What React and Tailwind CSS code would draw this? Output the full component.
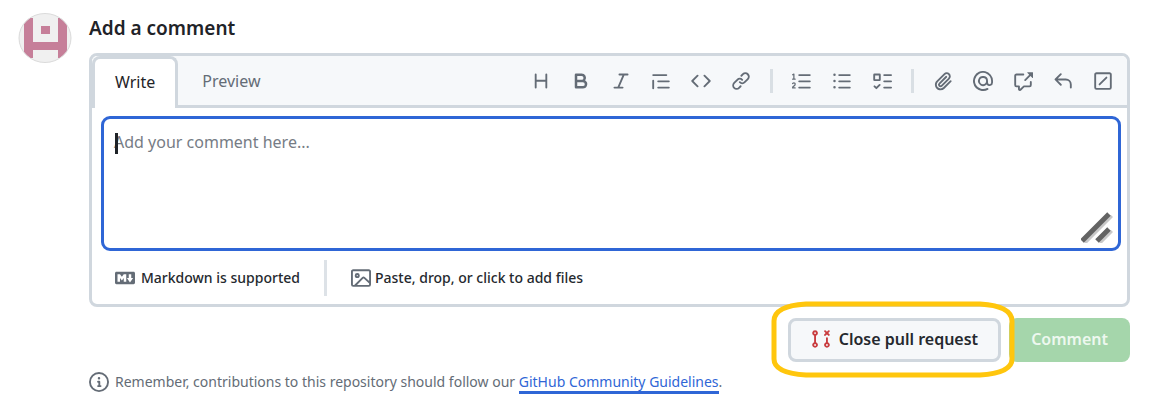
const ICONS = {
  heading: 'M3.75 2a.75.75 0 0 1 .75.75V7h7V2.75a.75.75 0 0 1 1.5 0v10.5a.75.75 0 0 1-1.5 0V8.5h-7v4.75a.75.75 0 0 1-1.5 0V2.75A.75.75 0 0 1 3.75 2Z',
  bold: 'M4 2h4.5a3.501 3.501 0 0 1 2.852 5.53A3.499 3.499 0 0 1 9.5 14H4a1 1 0 0 1-1-1V3a1 1 0 0 1 1-1Zm1 7v3h4.5a1.5 1.5 0 0 0 0-3Zm3.5-2a1.5 1.5 0 0 0 0-3H5v3Z',
  italic: 'M6 2.75A.75.75 0 0 1 6.75 2h6.5a.75.75 0 0 1 0 1.5h-2.505l-3.858 9H9.25a.75.75 0 0 1 0 1.5h-6.5a.75.75 0 0 1 0-1.5h2.505l3.858-9H6.75A.75.75 0 0 1 6 2.75Z',
  quote: 'M1.75 2.5h10.5a.75.75 0 0 1 0 1.5H1.75a.75.75 0 0 1 0-1.5Zm4 5h8.5a.75.75 0 0 1 0 1.5h-8.5a.75.75 0 0 1 0-1.5Zm0 5h8.5a.75.75 0 0 1 0 1.5h-8.5a.75.75 0 0 1 0-1.5ZM2.5 7.75v6a.75.75 0 0 1-1.5 0v-6a.75.75 0 0 1 1.5 0Z',
  code: 'm11.28 3.22 4.25 4.25a.75.75 0 0 1 0 1.06l-4.25 4.25a.749.749 0 0 1-1.275-.326.749.749 0 0 1 .215-.734L13.94 8l-3.72-3.72a.749.749 0 0 1 .326-1.275.749.749 0 0 1 .734.215Zm-6.56 0a.751.751 0 0 1 1.042.018.751.751 0 0 1 .018 1.042L2.06 8l3.72 3.72a.749.749 0 0 1-.326 1.275.749.749 0 0 1-.734-.215L.47 8.53a.75.75 0 0 1 0-1.06Z',
  link: 'm7.775 3.275 1.25-1.25a3.5 3.5 0 1 1 4.95 4.95l-2.5 2.5a3.5 3.5 0 0 1-4.95 0 .751.751 0 0 1 .018-1.042.751.751 0 0 1 1.042-.018 1.998 1.998 0 0 0 2.83 0l2.5-2.5a2.002 2.002 0 0 0-2.83-2.83l-1.25 1.25a.751.751 0 0 1-1.042-.018.751.751 0 0 1-.018-1.042Zm-4.69 9.64a1.998 1.998 0 0 0 2.83 0l1.25-1.25a.751.751 0 0 1 1.042.018.751.751 0 0 1 .018 1.042l-1.25 1.25a3.5 3.5 0 1 1-4.95-4.95l2.5-2.5a3.5 3.5 0 0 1 4.95 0 .751.751 0 0 1-.018 1.042.751.751 0 0 1-1.042.018 1.998 1.998 0 0 0-2.83 0l-2.5 2.5a1.998 1.998 0 0 0 0 2.83Z',
  ordered: 'M5 3.25a.75.75 0 0 1 .75-.75h8.5a.75.75 0 0 1 0 1.5h-8.5A.75.75 0 0 1 5 3.25Zm0 5a.75.75 0 0 1 .75-.75h8.5a.75.75 0 0 1 0 1.5h-8.5A.75.75 0 0 1 5 8.25Zm0 5a.75.75 0 0 1 .75-.75h8.5a.75.75 0 0 1 0 1.5h-8.5a.75.75 0 0 1-.75-.75ZM.924 10.32a.5.5 0 0 1-.851-.525l.001-.001.001-.002.002-.004.007-.011c.097-.144.215-.273.348-.384.228-.19.588-.392 1.068-.392.468 0 .858.181 1.126.484.259.294.377.673.377 1.038 0 .987-.686 1.495-1.156 1.845l-.047.035c-.303.225-.522.4-.654.597h1.357a.5.5 0 0 1 0 1H.5a.5.5 0 0 1-.5-.5c0-1.005.692-1.52 1.167-1.875l.035-.025c.531-.396.8-.625.8-1.078a.57.57 0 0 0-.128-.376C1.806 10.068 1.695 10 1.5 10a.658.658 0 0 0-.429.163.835.835 0 0 0-.144.153ZM2.003 2.5V6h.503a.5.5 0 0 1 0 1H.5a.5.5 0 0 1 0-1h.503V3.308l-.28.14a.5.5 0 0 1-.446-.895l1.003-.5a.5.5 0 0 1 .723.447Z',
  unordered: 'M5.75 2.5h8.5a.75.75 0 0 1 0 1.5h-8.5a.75.75 0 0 1 0-1.5Zm0 5h8.5a.75.75 0 0 1 0 1.5h-8.5a.75.75 0 0 1 0-1.5Zm0 5h8.5a.75.75 0 0 1 0 1.5h-8.5a.75.75 0 0 1 0-1.5ZM2 14a1 1 0 1 1 0-2 1 1 0 0 1 0 2Zm1-6a1 1 0 1 1-2 0 1 1 0 0 1 2 0ZM2 4a1 1 0 1 1 0-2 1 1 0 0 1 0 2Z',
  tasklist: 'M2 2h4a1 1 0 0 1 1 1v4a1 1 0 0 1-1 1H2a1 1 0 0 1-1-1V3a1 1 0 0 1 1-1Zm4.655 8.595a.75.75 0 0 1 0 1.06L4.03 14.28a.75.75 0 0 1-1.06 0l-1.5-1.5a.749.749 0 0 1 .326-1.275.749.749 0 0 1 .734.215l.97.97 2.095-2.095a.75.75 0 0 1 1.06 0ZM9.75 2.5h5.5a.75.75 0 0 1 0 1.5h-5.5a.75.75 0 0 1 0-1.5Zm0 5h5.5a.75.75 0 0 1 0 1.5h-5.5a.75.75 0 0 1 0-1.5Zm0 5h5.5a.75.75 0 0 1 0 1.5h-5.5a.75.75 0 0 1 0-1.5Zm-7.25-9v3h3v-3Z',
  paperclip: 'M12.212 3.02a1.753 1.753 0 0 0-2.478.003l-5.83 5.83a3.007 3.007 0 0 0-.88 2.127c0 .795.315 1.551.88 2.116.567.567 1.333.89 2.126.89.79 0 1.548-.321 2.116-.89l5.48-5.48a.75.75 0 0 1 1.061 1.06l-5.48 5.48a4.492 4.492 0 0 1-3.177 1.33c-1.2 0-2.345-.487-3.187-1.33a4.483 4.483 0 0 1-1.32-3.177c0-1.195.475-2.341 1.32-3.186l5.83-5.83a3.25 3.25 0 0 1 5.553 2.297c0 .863-.343 1.691-.953 2.301L7.439 12.39c-.375.377-.884.59-1.416.593a1.998 1.998 0 0 1-1.412-.593 1.992 1.992 0 0 1 0-2.828l5.48-5.48a.751.751 0 0 1 1.042.018.751.751 0 0 1 .018 1.042l-5.48 5.48a.492.492 0 0 0 0 .707.499.499 0 0 0 .352.154.51.51 0 0 0 .356-.154l5.833-5.827a1.755 1.755 0 0 0 0-2.481Z',
  mention: 'M4.75 2.37a6.501 6.501 0 0 0 6.5 11.26.75.75 0 0 1 .75 1.298A7.999 7.999 0 0 1 .989 4.148 8 8 0 0 1 16 7.75v1.5a2.75 2.75 0 0 1-5.072 1.475 3.999 3.999 0 0 1-6.65-4.19A4 4 0 0 1 12 8v1.25a1.25 1.25 0 0 0 2.5 0V7.867a6.5 6.5 0 0 0-9.75-5.496ZM10.5 8a2.5 2.5 0 1 0-5 0 2.5 2.5 0 0 0 5 0Z',
  crossReference: 'M2.75 3.5a.25.25 0 0 0-.25.25v7.5c0 .138.112.25.25.25h2a.75.75 0 0 1 .75.75v2.19l2.72-2.72a.749.749 0 0 1 .53-.22h4.5a.25.25 0 0 0 .25-.25v-2.5a.75.75 0 0 1 1.5 0v2.5A1.75 1.75 0 0 1 13.25 13H9.06l-2.573 2.573A1.458 1.458 0 0 1 4 14.543V13H2.75A1.75 1.75 0 0 1 1 11.25v-7.5C1 2.784 1.784 2 2.75 2h5.5a.75.75 0 0 1 0 1.5ZM16 1.25v4.146a.25.25 0 0 1-.427.177L14.03 4.03l-3.75 3.75a.749.749 0 0 1-1.275-.326.749.749 0 0 1 .215-.734l3.75-3.75-1.543-1.543A.25.25 0 0 1 11.604 1h4.146a.25.25 0 0 1 .25.25Z',
  reply: 'M6.78 1.97a.75.75 0 0 1 0 1.06L3.81 6h6.44A4.75 4.75 0 0 1 15 10.75v2.5a.75.75 0 0 1-1.5 0v-2.5a3.25 3.25 0 0 0-3.25-3.25H3.81l2.97 2.97a.749.749 0 0 1-.326 1.275.749.749 0 0 1-.734-.215L1.47 7.28a.75.75 0 0 1 0-1.06l4.25-4.25a.75.75 0 0 1 1.06 0Z',
  diffIgnored: 'M13.25 1c.966 0 1.75.784 1.75 1.75v10.5A1.75 1.75 0 0 1 13.25 15H2.75A1.75 1.75 0 0 1 1 13.25V2.75C1 1.784 1.784 1 2.75 1ZM2.75 2.5a.25.25 0 0 0-.25.25v10.5c0 .138.112.25.25.25h10.5a.25.25 0 0 0 .25-.25V2.75a.25.25 0 0 0-.25-.25Zm8.53 3.28-5.5 5.5a.75.75 0 0 1-1.06-1.06l5.5-5.5a.75.75 0 0 1 1.06 1.06Z',
  markdown: 'M14.85 3c.63 0 1.15.52 1.14 1.15v7.7c0 .63-.51 1.15-1.15 1.15H1.15C.52 13 0 12.48 0 11.84V4.15C0 3.52.52 3 1.15 3ZM9 11V5H7L5.5 7 4 5H2v6h2V8l1.5 1.92L7 8v3Zm2.99.5L14.5 8H13V5h-2v3H9.5Z',
  image: 'M16 13.25A1.75 1.75 0 0 1 14.25 15H1.75A1.75 1.75 0 0 1 0 13.25V2.75C0 1.784.784 1 1.75 1h12.5c.966 0 1.75.784 1.75 1.75ZM1.75 2.5a.25.25 0 0 0-.25.25v10.5c0 .138.112.25.25.25h.94l.03-.03 6.077-6.078a1.75 1.75 0 0 1 2.412-.06L14.5 10.31V2.75a.25.25 0 0 0-.25-.25Zm12.5 11a.25.25 0 0 0 .25-.25v-.917l-4.298-3.889a.25.25 0 0 0-.344.009L4.81 13.5ZM7 6a2 2 0 1 1-3.999.001A2 2 0 0 1 7 6ZM5.5 6a.5.5 0 1 0-1 0 .5.5 0 0 0 1 0Z',
  info: 'M0 8a8 8 0 1 1 16 0A8 8 0 0 1 0 8Zm8-6.5a6.5 6.5 0 1 0 0 13 6.5 6.5 0 0 0 0-13ZM6.5 7.75A.75.75 0 0 1 7.25 7h1a.75.75 0 0 1 .75.75v2.75h.25a.75.75 0 0 1 0 1.5h-2a.75.75 0 0 1 0-1.5h.25v-2h-.25a.75.75 0 0 1-.75-.75ZM8 6a1 1 0 1 1 0-2 1 1 0 0 1 0 2Z',
  pullRequestClosed: 'M3.25 1A2.25 2.25 0 0 1 4 5.372v5.256a2.251 2.251 0 1 1-1.5 0V5.372A2.251 2.251 0 0 1 3.25 1Zm9.5 5.5a.75.75 0 0 1 .75.75v3.378a2.251 2.251 0 1 1-1.5 0V7.25a.75.75 0 0 1 .75-.75Zm-2.03-5.273a.75.75 0 0 1 1.06 0l.97.97.97-.97a.748.748 0 0 1 1.265.332.75.75 0 0 1-.205.729l-.97.97.97.97a.751.751 0 0 1-.018 1.042.751.751 0 0 1-1.042.018l-.97-.97-.97.97a.749.749 0 0 1-1.275-.326.749.749 0 0 1 .215-.734l.97-.97-.97-.97a.75.75 0 0 1 0-1.06ZM2.5 3.25a.75.75 0 1 0 1.5 0 .75.75 0 0 0-1.5 0ZM3.25 12a.75.75 0 1 0 0 1.5.75.75 0 0 0 0-1.5Zm9.5 0a.75.75 0 1 0 0 1.5.75.75 0 0 0 0-1.5Z',
};

const TOOL_GROUPS = [
  [
    ['Heading', 'heading'],
    ['Bold', 'bold'],
    ['Italic', 'italic'],
    ['Quote', 'quote'],
    ['Code', 'code'],
    ['Link', 'link'],
  ],
  [
    ['Numbered list', 'ordered'],
    ['Unordered list', 'unordered'],
    ['Task list', 'tasklist'],
  ],
  [
    ['Attach files', 'paperclip'],
    ['Mention', 'mention'],
    ['Reference', 'crossReference'],
    ['Saved replies', 'reply'],
    ['Slash commands', 'diffIgnored'],
  ],
];

function Icon({ name, className = 'size-5' }) {
  return (
    <svg viewBox="0 0 16 16" fill="currentColor" aria-hidden="true" className={`shrink-0 ${className}`}>
      <path d={ICONS[name]} />
    </svg>
  );
}

function Avatar() {
  return (
    <svg viewBox="0 0 54 50" className="h-[50px] w-[54px] shrink-0" aria-hidden="true">
      <defs>
        <clipPath id="avatar-clip">
          <ellipse cx="27" cy="25" rx="26" ry="24.5" />
        </clipPath>
      </defs>
      <g clipPath="url(#avatar-clip)">
        <rect width="54" height="50" fill="#f0f0f0" />
        <path fill="#c67f99" d="M6 5h9v24h25V5h9v40h-9v-8H15v8H6ZM23 13h9v8h-9Z" />
      </g>
      <ellipse cx="27" cy="25" rx="26" ry="24.5" fill="none" stroke="#dadada" />
    </svg>
  );
}

function Toolbar() {
  return (
    <div role="toolbar" aria-label="Formatting" className="flex items-center pr-1 text-[#646c76]">
      {TOOL_GROUPS.map((group, index) => (
        <div key={index} className="flex items-center">
          {index > 0 && <span className="mx-[9px] h-6 w-[3px] bg-[#d9dfe4]" />}
          {group.map(([label, icon]) => (
            <button key={icon} type="button" aria-label={label} className="flex h-10 w-10 items-center justify-center">
              <Icon name={icon} />
            </button>
          ))}
        </div>
      ))}
    </div>
  );
}

function CommentBox() {
  return (
    <div className="rounded-lg border-[3px] border-[#d0d7de] bg-white">
      <div className="flex h-[52px] justify-between rounded-t-md border-b-[3px] border-[#d0d7de] bg-[#f6f8fa]">
        <div role="tablist" className="flex text-base">
          <button
            type="button"
            role="tab"
            aria-selected="true"
            className="-mb-[3px] h-[52px] rounded-t-lg border-[3px] border-b-0 border-[#d0d7de] bg-white px-5 pb-1 text-[#1f2328]"
          >
            Write
          </button>
          <button type="button" role="tab" aria-selected="false" className="px-6 text-[#646c76]">
            Preview
          </button>
        </div>
        <Toolbar />
      </div>
      <div className="relative ml-[9px] mr-1.5 mt-2 flex">
        <textarea
          aria-label="Comment"
          placeholder="Add your comment here..."
          className="h-[135px] w-full resize-none rounded-[9px] border-[3px] border-[#2f66d6] bg-white px-2.5 py-[11px] text-base text-[#1f2328] outline-none placeholder:text-[#767c85]"
        />
        <span className="absolute left-3.5 top-[17px] h-[21px] w-[3px] bg-[#1f2328]" />
        <svg viewBox="0 0 32 32" aria-hidden="true" className="absolute bottom-2 right-2 size-8">
          <path d="M4 32 31 5M19 32 31 20" stroke="#c9c9c9" strokeWidth="3" />
          <path d="M1 30 28 3M16 30 28 18" stroke="#636363" strokeWidth="5" />
        </svg>
      </div>
      <div className="flex h-[53px] items-center pl-[23px] text-sm font-medium text-[#25292e]">
        <a href="#markdown" className="flex items-center gap-1.5">
          <Icon name="markdown" className="size-5 text-[#646c76]" />
          Markdown is supported
        </a>
        <span className="mx-6 h-9 w-[3px] bg-[#dde2e7]" />
        <button type="button" className="flex items-center gap-1">
          <Icon name="image" className="size-5 text-[#646c76]" />
          Paste, drop, or click to add files
        </button>
      </div>
    </div>
  );
}

export default function App() {
  return (
    <main className="flex items-start gap-[17px] bg-white pl-[18px] pr-10 pt-[13px] font-['Noto_Sans','Open_Sans',sans-serif] text-[#1f2328]">
      <Avatar />
      <form className="min-w-0 flex-1" onSubmit={(event) => event.preventDefault()}>
        <h2 className="mb-2.5 text-[19px] font-semibold leading-[30px]">Add a comment</h2>
        <CommentBox />
        <div className="mt-[11px] flex justify-end gap-2">
          <div className="relative">
            <button
              type="button"
              className="flex h-11 items-center gap-2 rounded-lg border-[3px] border-[#d0d7de] bg-[#f6f8fa] px-5 pb-0.5 text-base font-semibold text-[#25292e]"
            >
              <Icon name="pullRequestClosed" className="size-5 text-[#c93c3f]" />
              Close pull request
            </button>
            <svg
              viewBox="0 0 244 77"
              preserveAspectRatio="none"
              aria-hidden="true"
              className="pointer-events-none absolute -left-[17px] -top-[17px] z-10 h-[77px] w-[244px] max-w-none"
            >
              <path
                d="M35 3H209Q241 5 241 20V58Q241 72 209 74H35Q3 72 3 58V20Q3 5 35 3Z"
                fill="none"
                stroke="#ffc60d"
                strokeWidth="5"
              />
            </svg>
          </div>
          <button type="submit" className="h-11 rounded-lg bg-[#a5d6ab] px-[22px] pb-0.5 text-base font-semibold text-[#edf8ef]">
            Comment
          </button>
        </div>
        <p className="mt-2 flex items-center gap-1.5 text-sm leading-6 text-[#646c76]">
          <Icon name="info" />
          <span>
            Remember, contributions to this repository should follow our{' '}
            <a href="#guidelines" className="border-b-[3px] border-[#2f66d6] text-[#2f66d6]">
              GitHub Community Guidelines
            </a>
            .
          </span>
        </p>
      </form>
    </main>
  );
}
